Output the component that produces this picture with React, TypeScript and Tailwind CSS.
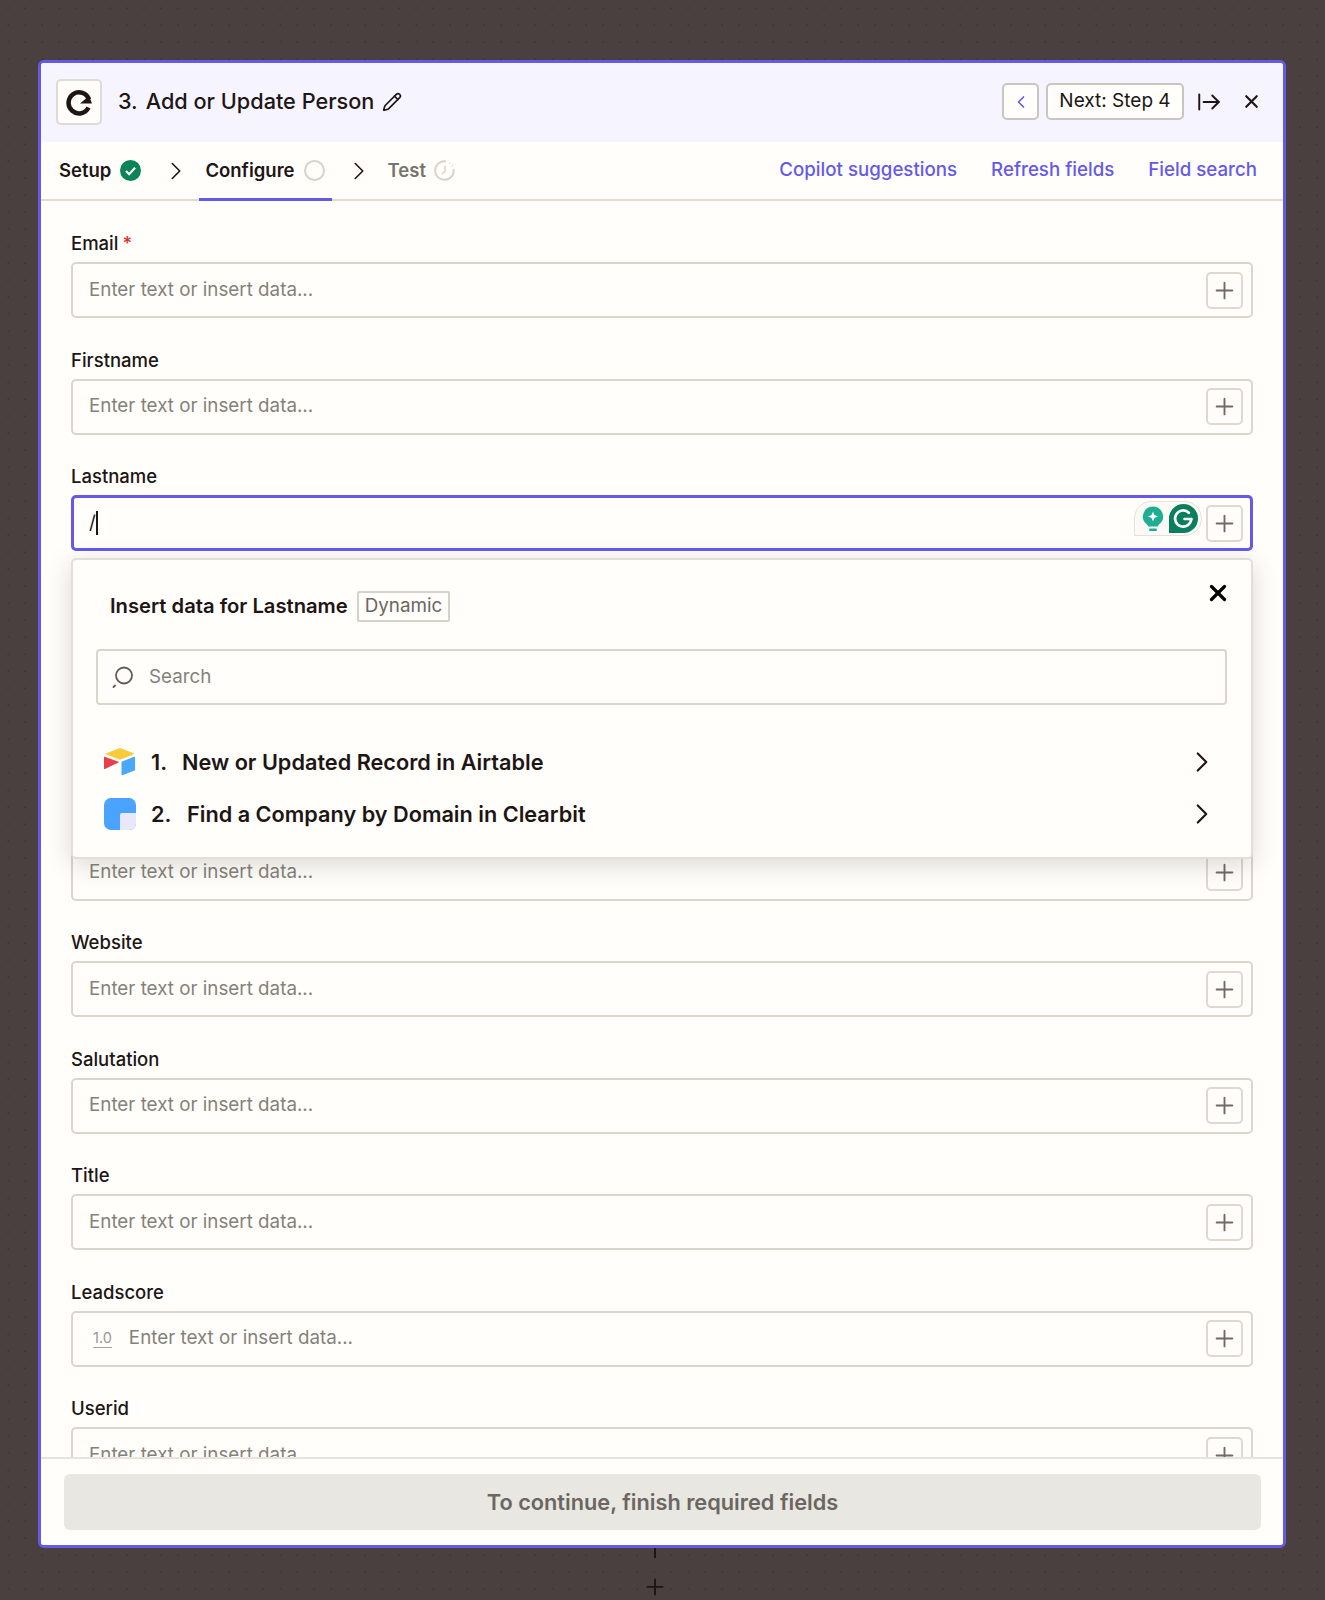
import React from 'react';
import { ArrowRightFromLine, ChevronLeft, ChevronRight, Pencil, Plus, X } from 'lucide-react';

const PLACEHOLDER = 'Enter text or insert data...';

const PlusBox = () => (
  <div className="flex h-[37px] w-[37px] shrink-0 items-center justify-center rounded-[5px] border-2 border-[#dcd9d1] bg-[#fffefb] text-[#6f6b66]">
    <Plus size={27} strokeWidth={1.700} />
  </div>
);

const Label = ({ children }: { children?: React.ReactNode }) => (
  <div className="mb-[7px] h-[24px] text-[18.500px] leading-[24px] font-medium text-[#201515]">{children}</div>
);

// regular form row; label can be empty when the popup covers it
const Field = ({ label, required, prefix }: { label?: string; required?: boolean; prefix?: boolean }) => (
  <div>
    <Label>
      {label}
      {required && <span className="ml-[4px] text-[#e0301e]">*</span>}
    </Label>
    <div className="flex h-[56px] items-center rounded-[5px] border-2 border-[#d9d6ce] bg-[#fffefb] pr-[8px] pl-[16px]">
      {prefix && (
        <span className="mr-[17px] ml-[4px] border-b border-[#a8a49d] text-[14.500px] leading-[18px] text-[#9a968f]">1.0</span>
      )}
      <span className="flex-1 text-[18.800px] text-[#85817a]">{PLACEHOLDER}</span>
      <PlusBox />
    </div>
  </div>
);

const Grammarly = () => (
  <div className="absolute top-[3px] right-[48px] flex h-[35px] w-[68px] items-center gap-[5px] rounded-t-[18px] rounded-br-[18px] border border-[#e3e1da] bg-[#fbfaf6] pl-[7px]">
    <svg width="22" height="26" viewBox="0 0 22 26">
      <path d="M11 .5a10 10 0 0 0-6.500 17.600c1 .9 1.500 1.500 1.700 2.400h9.600c.2-.9.700-1.500 1.700-2.400A10 10 0 0 0 11 .5z" fill="#1fae94" />
      <rect x="7" y="22.500" width="8" height="2.500" rx="1.200" fill="#1fae94" />
      <path d="M11 5.500l1.400 3.600 3.600 1.400-3.600 1.400L11 15.500l-1.400-3.600L6 10.500l3.600-1.400z" fill="#fff" />
    </svg>
    <svg width="29" height="29" viewBox="0 0 28 28">
      <path d="M14 0a14 14 0 0 1 0 28H0V14A14 14 0 0 1 14 0z" fill="#0b7f5d" />
      <path d="M21.500 14.500a7.800 7.800 0 1 1-2.300-6" fill="none" stroke="#fff" strokeWidth="2.600" strokeLinecap="round" />
      <path d="M15 14.500h6.500" stroke="#fff" strokeWidth="2.600" strokeLinecap="round" />
    </svg>
  </div>
);

const AirtableLogo = () => (
  <svg width="32" height="28" viewBox="0 0 32 28" className="shrink-0">
    <path d="M14.500.6L2.500 5.200c-.6.3-.6 1 0 1.300l12 4.700c1 .4 2 .4 3 0l12-4.700c.6-.3.6-1 0-1.300L17.500.6c-1-.4-2-.4-3 0z" fill="#f8cb3c" />
    <path d="M17.500 14.200v12.300c0 .5.500.9 1 .7l12-4.700c.4-.1.600-.4.600-.8V9.500c0-.5-.5-.9-1-.7l-12 4.700c-.4.100-.6.400-.6.700z" fill="#4aa8fb" />
    <path d="M14.500 14.500L.9 21.100c-.4.200-.9-.1-.9-.6V9.200c0-.2.100-.3.200-.4.100-.1.300-.2.500-.1l13.800 5c.5.2.5.600 0 .8z" fill="#e8404a" />
  </svg>
);

const ClearbitLogo = () => (
  <div className="flex h-[32px] w-[32px] shrink-0 items-end justify-end overflow-hidden rounded-[7px] bg-[#4aa3ff]">
    <div className="h-[17px] w-[16px] rounded-tl-[2px] bg-[#e9e8fb]" />
  </div>
);

const Popup = () => (
  <div className="absolute top-[357px] right-[30px] left-[30px] h-[301px] rounded-[5px] border-2 border-[#e2dfd8] bg-[#fffefb] shadow-[0_6px_24px_rgba(60,50,40,0.18)]">
    <div className="flex h-[89px] items-start pt-[31px] pl-[37px]">
      <span className="text-[20.200px] leading-[30px] font-semibold text-[#201515]">Insert data for Lastname</span>
      <span className="ml-[9px] flex h-[31px] items-center rounded-[2px] border-2 border-[#d5d2ca] px-[6px] text-[18.800px] text-[#6b6661]">Dynamic</span>
      <X className="absolute top-[20px] right-[20px] text-black" size={26} strokeWidth={3} />
    </div>
    <div className="mr-[24px] ml-[23px] flex h-[56px] items-center rounded-[4px] border-2 border-[#d9d6ce] pl-[13px]">
      <svg width="24" height="24" viewBox="0 0 24 24" fill="none" stroke="#5f5b56" strokeWidth="1.800" strokeLinecap="round">
        <circle cx="13" cy="10.500" r="8" />
        <path d="M2.500 22L4 20.500" />
      </svg>
      <span className="ml-[14px] text-[18.800px] text-[#85817a]">Search</span>
    </div>
    <div className="mt-[31px] flex h-[52px] items-center pr-[32px] pl-[31px] text-[21.700px] font-semibold text-[#201515]">
      <AirtableLogo />
      <span className="ml-[15px] w-[31px]">1.</span>
      <span className="flex-1">New or Updated Record in Airtable</span>
      <ChevronRight size={34} strokeWidth={1.500} />
    </div>
    <div className="flex h-[52px] items-center pr-[32px] pl-[31px] text-[21.700px] font-semibold text-[#201515]">
      <ClearbitLogo />
      <span className="ml-[15px] w-[36px]">2.</span>
      <span className="flex-1">Find a Company by Domain in Clearbit</span>
      <ChevronRight size={34} strokeWidth={1.500} />
    </div>
  </div>
);

const Header = () => (
  <div className="flex h-[79px] shrink-0 items-center bg-[#f6f5ff] pr-[21px] pb-[2px] pl-[15px]">
    <div className="flex h-[46px] w-[46px] items-center justify-center rounded-[5px] border-2 border-[#dedbd3] bg-[#fffefb]">
      <svg width="28" height="28" viewBox="0 0 28 28" fill="none">
        <path d="M23.500 19.500A10.500 10.500 0 1 1 24 11.500" stroke="#201515" strokeWidth="4.500" />
        <path d="M15 15.500h12L24 8z" fill="#201515" />
      </svg>
    </div>
    <span className="ml-[16px] text-[21.700px] font-medium text-[#201515]">3.</span>
    <span className="ml-[8px] text-[21.700px] font-medium text-[#201515]">Add or Update Person</span>
    <Pencil className="ml-[8px] text-[#201515]" size={20} strokeWidth={2} />
    <div className="ml-auto flex h-[37px] w-[37px] items-center justify-center rounded-[5px] border-2 border-[#c9c6bf] bg-[#fffefb] text-[#6559ea]">
      <ChevronLeft size={20} strokeWidth={2} />
    </div>
    <div className="ml-[7px] flex h-[37px] w-[138px] items-center justify-center rounded-[5px] border-2 border-[#c9c6bf] bg-[#fffefb] text-[19px] text-[#201515]">
      Next: Step 4
    </div>
    <ArrowRightFromLine className="ml-[12px] text-[#201515]" size={26} strokeWidth={1.800} />
    <X className="ml-[19px] text-[#201515]" size={21} strokeWidth={2.500} />
  </div>
);

const Tabs = () => (
  <div className="flex h-[59px] shrink-0 items-center border-b-2 border-[#dedbd3] pr-[26px] pl-[18px] text-[18.500px]">
    <span className="font-semibold text-[#201515]">Setup</span>
    <svg className="ml-[9px]" width="21" height="21" viewBox="0 0 21 21" fill="none">
      <circle cx="10.500" cy="10.500" r="10.500" fill="#0b8457" />
      <path d="M6 11l3.200 3.200L15 7.800" stroke="#fff" strokeWidth="2.200" />
    </svg>
    <ChevronRight className="ml-[20px] text-[#201515]" size={30} strokeWidth={1.300} />
    <div className="relative ml-[14px] flex h-full items-center">
      <span className="font-semibold text-[#201515]">Configure</span>
      <span className="ml-[9px] h-[21px] w-[21px] rounded-full border-2 border-[#d6d3cb]" />
      <span className="absolute right-[-7px] bottom-[-2px] left-[-6px] h-[3px] bg-[#6559ea]" />
    </div>
    <ChevronRight className="ml-[19px] text-[#201515]" size={30} strokeWidth={1.300} />
    <span className="ml-[14px] font-semibold text-[#77736d]">Test</span>
    <svg className="ml-[8px]" width="21" height="21" viewBox="0 0 21 21" fill="none" stroke="#d6d3cb" strokeWidth="2">
      <path d="M12 1.400A9.300 9.300 0 1 0 19.600 9" />
      <path d="M15.500 3l.5.4M18 5.500l.4.6" />
      <path d="M11 5.500V11l-3 3" strokeWidth="1.500" />
    </svg>
    <div className="ml-auto flex gap-[34px] text-[18.700px] font-medium text-[#6559ea]">
      <span>Copilot suggestions</span>
      <span>Refresh fields</span>
      <span>Field search</span>
    </div>
  </div>
);

const App: React.FC = () => {
  return (
    <div className="flex h-[1600px] flex-col items-start overflow-hidden bg-[#4a403f] bg-[radial-gradient(#3f3635_1px,transparent_1px)] bg-[size:17px_17px] pt-[60px] pl-[38px] font-['Inter',sans-serif]">
      <div className="flex h-[1488px] w-[1248px] shrink-0 flex-col overflow-hidden rounded-[6px] border-[3px] border-[#6559ea] bg-[#fffefb]">
        <Header />
        <Tabs />

        {/* form body, cut off by the footer */}
        <div className="relative flex-1 overflow-hidden">
          <div className="flex flex-col gap-[29.500px] pt-[30px] pr-[30px] pl-[30px]">
            <Field label="Email" required />
            <Field label="Firstname" />
            <div>
              <Label>Lastname</Label>
              <div className="relative flex h-[56px] items-center rounded-[5px] border-[3px] border-[#6559ea] bg-[#fffefb] pr-[7px] pl-[15px]">
                <span className="text-[19px] text-[#201515]">/</span>
                <span className="h-[24px] w-[2px] bg-[#201515]" />
                <span className="flex-1" />
                <Grammarly />
                <PlusBox />
              </div>
            </div>
            {/* two rows fully behind the popup */}
            <div className="h-[203.500px]" />
            <Field />
            <Field label="Website" />
            <Field label="Salutation" />
            <Field label="Title" />
            <Field label="Leadscore" prefix />
            <Field label="Userid" />
          </div>
          <Popup />
        </div>

        <div className="shrink-0 border-t-2 border-[#e6e4dd] bg-[#fffefb] pt-[15px] pr-[22px] pb-[15px] pl-[23px]">
          <div className="flex h-[56px] items-center justify-center rounded-[6px] bg-[#e9e7e1] text-[21.750px] font-semibold text-[#6b6661]">
            To continue, finish required fields
          </div>
        </div>
      </div>

      {/* connector to the next step */}
      <div className="ml-[616px] h-[15px] w-[2px] bg-[#201515]" />
      <Plus className="mt-[16px] ml-[598px] text-[#201515]" size={38} strokeWidth={1.800} />
    </div>
  );
};

export default App;
